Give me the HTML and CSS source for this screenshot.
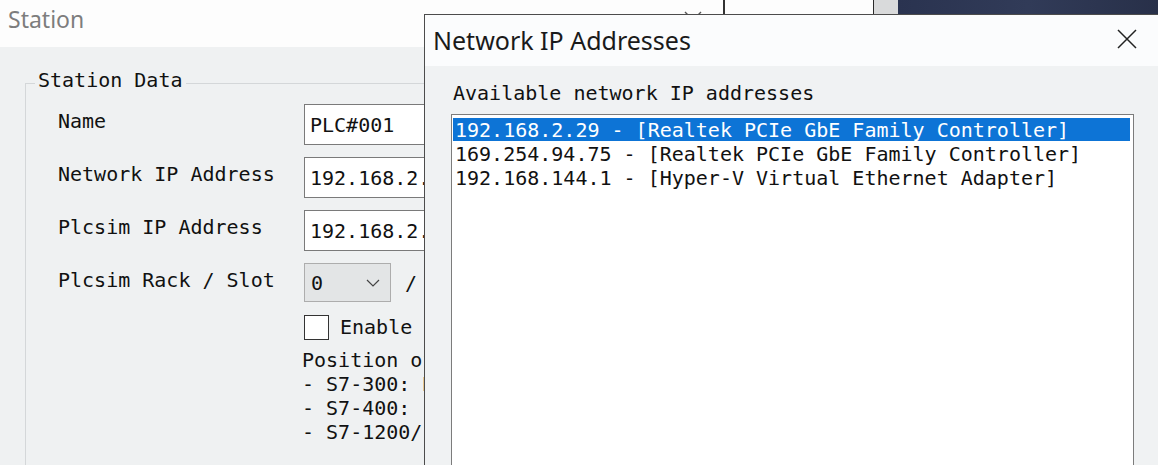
FILE: index.html
```html
<!DOCTYPE html>
<html>
<head>
<meta charset="utf-8">
<link rel="stylesheet" href="styles.css">
</head>
<body>
<div class="screen">
  <div class="station">
    <header class="st-head">
      <span class="st-title">Station</span>
      <span class="st-tools">
        <svg class="st-chev" width="20" height="12" viewBox="0 0 20 12"><path d="M2 2 L10 10 L18 2" fill="none" stroke="#555" stroke-width="1.4"/></svg>
        <span class="st-sep"></span>
      </span>
    </header>
    <main class="st-panel">
      <fieldset class="group">
        <legend>Station Data</legend>
        <div class="form">
          <span class="lbl">Name</span>
          <div class="field"><span class="input">PLC#001</span></div>

          <span class="lbl">Network IP Address</span>
          <div class="field"><span class="input">192.168.2.29</span></div>

          <span class="lbl">Plcsim IP Address</span>
          <div class="field"><span class="input">192.168.2.30</span></div>

          <span class="lbl">Plcsim Rack / Slot</span>
          <div class="field rack">
            <span class="select">0<svg width="14" height="8" viewBox="0 0 14 8"><path d="M1 1 L7 7 L13 1" fill="none" stroke="#444" stroke-width="1.2"/></svg></span>
            <span class="slash">/</span>
            <span class="select">2<svg width="14" height="8" viewBox="0 0 14 8"><path d="M1 1 L7 7 L13 1" fill="none" stroke="#444" stroke-width="1.2"/></svg></span>
          </div>

          <span></span>
          <div class="check-row"><span class="check"></span><span>Enable TSAP</span></div>

          <span></span>
          <div class="note">Position of the CPU in the rack:<br>- S7-300: Rack 0, Slot 2<br>- S7-400: (see HW config)<br>- S7-1200/1500: Rack 0, Slot 1</div>
        </div>
      </fieldset>
    </main>
  </div>
  <div class="strip"></div>
  <div class="desktop"></div>

  <section class="dialog">
    <div class="dlg-title">
      <span class="dlg-caption">Network IP Addresses</span>
      <svg class="dlg-close" width="20" height="20" viewBox="0 0 20 20"><path d="M1 1 L19 19 M19 1 L1 19" stroke="#222" stroke-width="1.5"/></svg>
    </div>
    <div class="dlg-body">
      <div class="dlg-label">Available network IP addresses</div>
      <ul class="listbox">
        <li class="sel">192.168.2.29 - [Realtek PCIe GbE Family Controller]</li>
        <li>169.254.94.75 - [Realtek PCIe GbE Family Controller]</li>
        <li>192.168.144.1 - [Hyper-V Virtual Ethernet Adapter]</li>
      </ul>
    </div>
  </section>
</div>
</body>
</html>
```

FILE: styles.css
```css
* { box-sizing: border-box; }
body { margin: 0; background: #eff1f2; }

.screen {
  width: 1158px;
  height: 465px;
  position: relative;
  overflow: hidden;
  display: flex;
}

/* ---------- station window (behind) ---------- */
.station {
  width: 874px;
  flex: none;
  display: flex;
  flex-direction: column;
  border-right: 1px solid #2a2a2a;
  background: #eff1f2;
}
.st-head {
  height: 47px;
  flex: none;
  background: #fdfdfd;
  display: flex;
  align-items: flex-start;
  padding: 3px 0 0 8px;
}
.st-title {
  font-family: "Noto Sans", sans-serif;
  font-size: 23px;
  color: #7d7d7d;
}
.st-tools {
  margin-left: auto;
  display: flex;
  align-items: flex-start;
  gap: 20px;
  padding-right: 148px;
}
.st-chev { margin-top: 7px; }
.st-sep {
  width: 2px;
  height: 40px;
  margin-top: -3px;
  background: #333;
}
.st-panel {
  flex: 1;
  padding: 21px 0 0 25px;
  background: #eff1f2;
}

.group {
  margin: 0;
  padding: 6px 0 0 9px;
  border: 1px solid #d4d7d9;
  height: 500px;
  font-family: "DejaVu Sans Mono", "Liberation Mono", monospace;
  font-size: 20px;
  color: #111;
}
.group legend {
  padding: 0 3px 6px;
  line-height: 24px;
  font-size: 20px;
  color: #111;
}
.form {
  margin-left: 23px;
  display: grid;
  grid-template-columns: 246px 300px;
  grid-template-rows: 41px 41px 41px 41px 25px auto;
  row-gap: 12px;
  line-height: 24px;
}
.lbl {
  align-self: center;
  padding-bottom: 8px;
  white-space: nowrap;
}
.field { display: flex; align-items: stretch; }
.input {
  width: 200px;
  background: #fff;
  border: 1px solid #7a7a7a;
  padding-left: 5px;
  display: flex;
  align-items: center;
  white-space: nowrap;
}
.rack { align-items: center; gap: 14px; height: 39px; }
.select {
  width: 87px;
  height: 39px;
  background: #e3e5e6;
  border: 1px solid #adadad;
  display: flex;
  align-items: center;
  justify-content: space-between;
  padding: 0 10px 0 6px;
}
.check-row {
  margin-top: -3px;
  display: flex;
  align-items: center;
  gap: 11px;
  white-space: nowrap;
}
.check {
  width: 25px;
  height: 25px;
  background: #fff;
  border: 1px solid #333;
}
.note {
  margin: -5px 0 0 -2px;
  white-space: nowrap;
  line-height: 24px;
}

.strip { width: 24px; flex: none; background: #d9dadb; }
.desktop {
  flex: 1;
  background: linear-gradient(90deg, #2a3350, #313b58 50%, #283049);
}

/* ---------- dialog (on top) ---------- */
.dialog {
  position: absolute;
  left: 424px;
  top: 14px;
  width: 760px;
  height: 480px;
  border: 1px solid #4c4c4c;
  background: #f0f2f3;
  display: flex;
  flex-direction: column;
}
.dlg-title {
  height: 51px;
  flex: none;
  background: #fbfcfd;
  display: flex;
  align-items: flex-start;
  justify-content: space-between;
  padding: 8px 46px 0 8px;
}
.dlg-caption {
  font-family: "Noto Sans", sans-serif;
  font-size: 25px;
  color: #1a1a1a;
}
.dlg-close { margin-top: 6px; }
.dlg-body {
  flex: 1;
  padding: 15px 0 0 26px;
  font-family: "DejaVu Sans Mono", "Liberation Mono", monospace;
  font-size: 20px;
  color: #111;
}
.dlg-label {
  padding-left: 2px;
  line-height: 24px;
}
.listbox {
  list-style: none;
  margin: 9px 0 0;
  padding: 3px 3px 0 1px;
  width: 683px;
  height: 400px;
  background: #fff;
  border: 1px solid #7c7c7c;
}
.listbox li {
  height: 24px;
  line-height: 24px;
  padding-left: 2px;
  white-space: nowrap;
}
.listbox li.sel {
  background: #0d74d6;
  color: #fff;
  height: 23px;
  margin-bottom: 1px;
}
```
